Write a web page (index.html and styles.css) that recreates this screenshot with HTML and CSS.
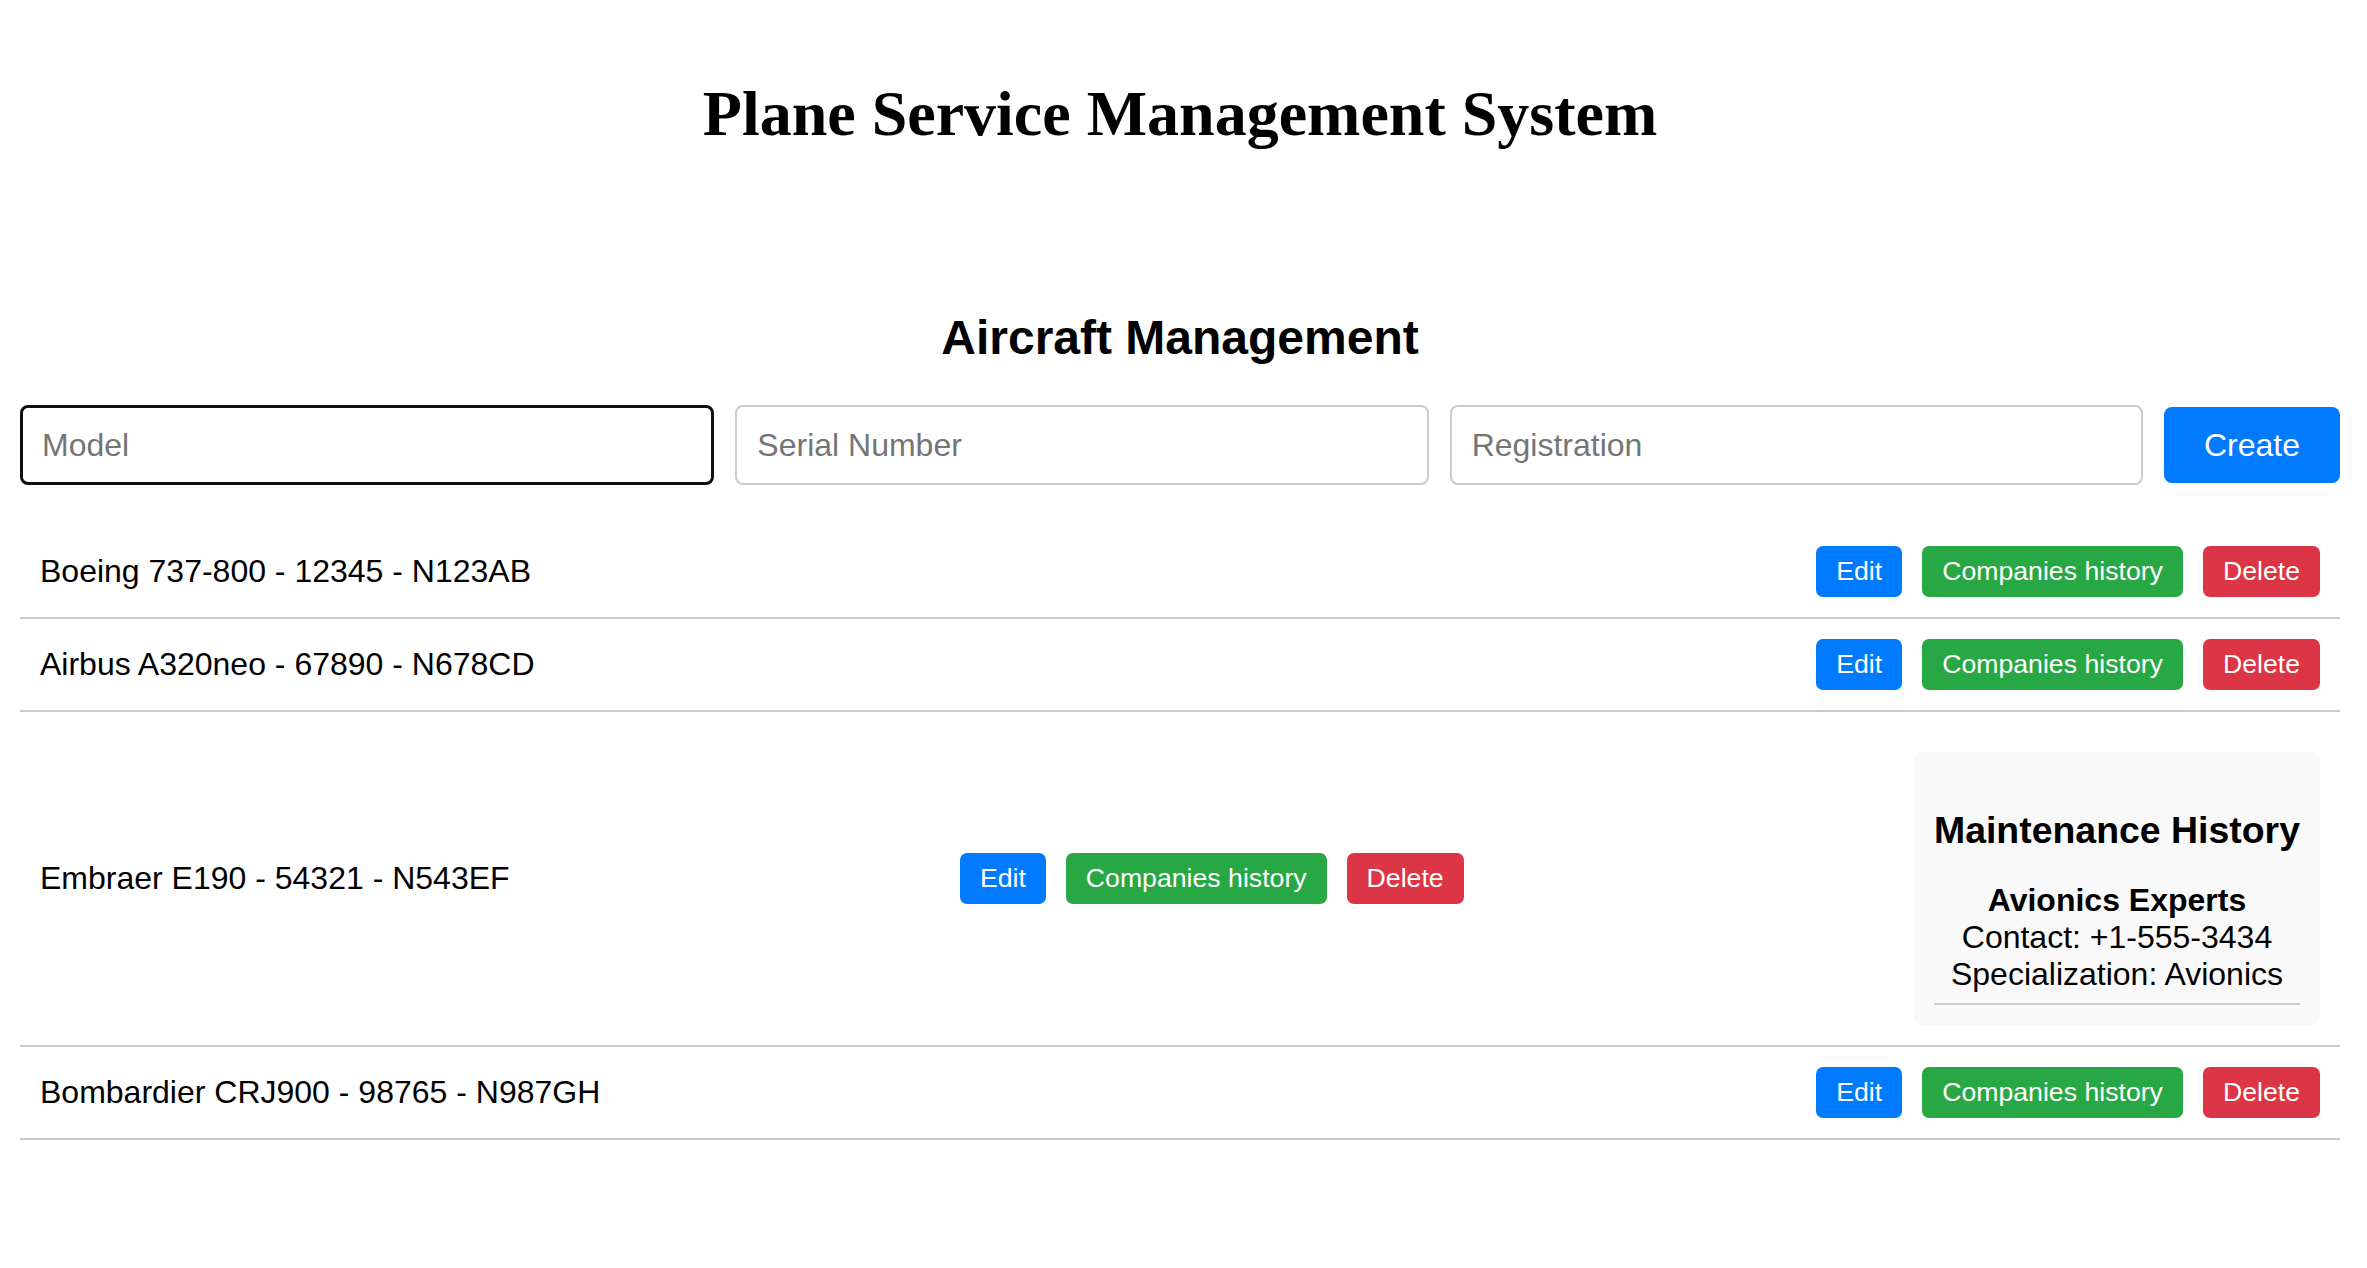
FILE: index.html
```html
<!DOCTYPE html>
<html lang="en">
<head>
<meta charset="utf-8">
<title>Plane Service Management System</title>
<link rel="stylesheet" href="styles.css">
</head>
<body>
<div class="page">
  <h1 class="app-title">Plane Service Management System</h1>
  <section class="aircraft">
    <h2 class="section-title">Aircraft Management</h2>
    <form class="create-form">
      <input class="field field-focused" type="text" placeholder="Model">
      <input class="field" type="text" placeholder="Serial Number">
      <input class="field" type="text" placeholder="Registration">
      <button type="button" class="btn-create">Create</button>
    </form>
    <ul class="plane-list">
      <li class="plane-row">
        <span class="plane-text">Boeing 737-800 - 12345 - N123AB</span>
        <div class="actions">
          <button type="button" class="btn btn-edit">Edit</button>
          <button type="button" class="btn btn-history">Companies history</button>
          <button type="button" class="btn btn-delete">Delete</button>
        </div>
      </li>
      <li class="plane-row">
        <span class="plane-text">Airbus A320neo - 67890 - N678CD</span>
        <div class="actions">
          <button type="button" class="btn btn-edit">Edit</button>
          <button type="button" class="btn btn-history">Companies history</button>
          <button type="button" class="btn btn-delete">Delete</button>
        </div>
      </li>
      <li class="plane-row">
        <span class="plane-text">Embraer E190 - 54321 - N543EF</span>
        <div class="actions">
          <button type="button" class="btn btn-edit">Edit</button>
          <button type="button" class="btn btn-history">Companies history</button>
          <button type="button" class="btn btn-delete">Delete</button>
        </div>
        <div class="history-panel">
          <h3 class="history-title">Maintenance History</h3>
          <div class="history-item">
            <strong class="company-name">Avionics Experts</strong>
            <div>Contact: +1-555-3434</div>
            <div>Specialization: Avionics</div>
          </div>
        </div>
      </li>
      <li class="plane-row">
        <span class="plane-text">Bombardier CRJ900 - 98765 - N987GH</span>
        <div class="actions">
          <button type="button" class="btn btn-edit">Edit</button>
          <button type="button" class="btn btn-history">Companies history</button>
          <button type="button" class="btn btn-delete">Delete</button>
        </div>
      </li>
    </ul>
  </section>
</div>
</body>
</html>
```

FILE: styles.css
```css
html, body {
  margin: 0;
  padding: 0;
  background: #ffffff;
}

.page {
  padding: 0 27px 0 20px;
  font-family: "Liberation Sans", Arial, sans-serif;
  color: #000;
}

.app-title {
  font-family: "Liberation Serif", "Times New Roman", serif;
  font-size: 64px;
  font-weight: bold;
  text-align: center;
  margin: 77px 0 0;
}

.section-title {
  font-size: 48px;
  font-weight: bold;
  text-align: center;
  margin: 159px 0 40px;
}

.create-form {
  display: flex;
  align-items: center;
  gap: 21px;
  margin: 0 0 41px;
}

.field {
  flex: 1 1 0;
  min-width: 0;
  box-sizing: border-box;
  height: 80px;
  padding: 0 20px;
  border: 2px solid #cccccc;
  border-radius: 8px;
  font-family: "Liberation Sans", Arial, sans-serif;
  font-size: 32px;
  color: #000;
  background: #fff;
  outline: none;
}

.field::placeholder {
  color: #757575;
}

.field-focused {
  border: 3px solid #101010;
  padding-left: 19px;
}

.btn-create {
  flex: 0 0 auto;
  box-sizing: border-box;
  width: 176px;
  height: 76px;
  border: none;
  border-radius: 8px;
  background: #007bff;
  color: #fff;
  font-family: "Liberation Sans", Arial, sans-serif;
  font-size: 32px;
  padding: 0;
}

.plane-list {
  list-style: none;
  margin: 0;
  padding: 0;
}

.plane-row {
  display: flex;
  justify-content: space-between;
  align-items: center;
  padding: 20px;
  border-bottom: 2px solid #cccccc;
  font-size: 32px;
}

.actions {
  display: flex;
  gap: 20px;
}

.btn {
  border: none;
  border-radius: 7px;
  color: #fff;
  font-family: "Liberation Sans", Arial, sans-serif;
  font-size: 26.67px;
  line-height: 31px;
  padding: 10px 20px;
}

.btn-edit { background: #007bff; }
.btn-history { background: #28a745; }
.btn-delete { background: #dc3545; }

.history-panel {
  margin-top: 20px;
  padding: 20px;
  background: #f9f9f9;
  border-radius: 8px;
  text-align: center;
}

.history-title {
  font-size: 37.44px;
  font-weight: bold;
  margin: 37px 0 30px;
}

.history-item {
  padding-bottom: 10px;
  border-bottom: 2px solid #cccccc;
  line-height: 37px;
}

.company-name {
  display: block;
  font-weight: bold;
}
```
